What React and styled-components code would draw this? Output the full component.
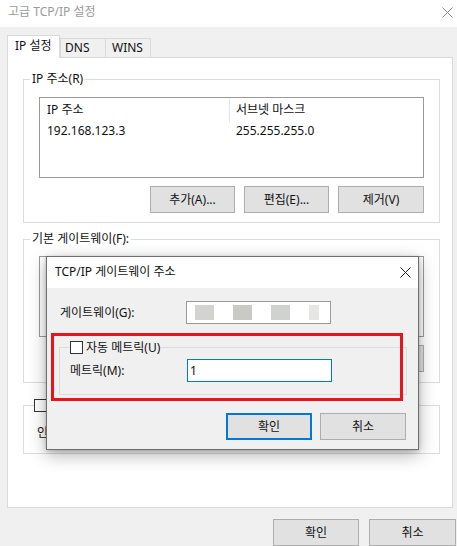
import React from 'react';
import styled, { createGlobalStyle } from 'styled-components';

const FONT = '"Noto Sans", "Noto Sans CJK KR", sans-serif';
const BORDER_LIGHT = '#d9d9d9';
const BTN_BORDER = '#adadad';
const WIN_BLUE = '#0078d7';

const GlobalStyle = createGlobalStyle`
  html, body { margin: 0; padding: 0; background: #f0f0f0; }
  body { font-family: ${FONT}; font-size: 12px; line-height: 16px; color: #111; }
  * { box-sizing: border-box; }
`;

const Window = styled.div`
  position: relative;
  width: 457px;
  height: 546px;
  background: #f0f0f0;
  overflow: hidden;
  display: flex;
  flex-direction: column;
`;

const TitleBar = styled.div`
  height: 27px;
  flex: none;
  background: #fff;
  display: flex;
  align-items: center;
  justify-content: space-between;
  padding: 0 4px 3px 8px;
  color: ${({ $active }) => ($active ? '#111' : '#9a9a9a')};
`;

const CloseIcon = ({ color = '#777' }) => (
  <svg width="11" height="11" viewBox="0 0 11 11">
    <path d="M0.5 0.5 L10.5 10.5 M10.5 0.5 L0.5 10.5" stroke={color} strokeWidth="1" fill="none" />
  </svg>
);

const Body = styled.div`
  flex: 1;
  display: flex;
  flex-direction: column;
  padding: 8px 1px 0 7px;
`;

const TabRow = styled.div`
  height: 22px;
  display: flex;
  align-items: flex-end;
  position: relative;
  z-index: 1;
`;

const Tab = styled.div`
  width: ${({ $w }) => $w}px;
  height: ${({ $selected }) => ($selected ? 23 : 19)}px;
  margin-bottom: ${({ $selected }) => ($selected ? -1 : 0)}px;
  margin-left: ${({ $ml }) => $ml || 0}px;
  padding-left: ${({ $pl }) => $pl}px;
  background: ${({ $selected }) => ($selected ? '#fff' : '#f0f0f0')};
  border: 1px solid ${BORDER_LIGHT};
  border-bottom: none;
  display: flex;
  align-items: center;
  padding-bottom: ${({ $selected }) => ($selected ? 2 : 0)}px;
`;

const Panel = styled.div`
  height: 451px;
  margin-right: 3px;
  background: #fff;
  border: 1px solid ${BORDER_LIGHT};
  padding: 0 12px 0 15px;
  display: flex;
  flex-direction: column;
`;

const Group = styled.fieldset`
  margin: ${({ $mt }) => $mt}px 0 0 0;
  padding: ${({ $pt }) => $pt}px 15px ${({ $pb }) => $pb}px ${({ $pl }) => $pl}px;
  border: 1px solid #dcdcdc;
  min-width: 0;
`;

const Legend = styled.legend`
  padding: 0 ${({ $px }) => ($px === undefined ? 2 : $px)}px;
  height: ${({ $h }) => $h || 16}px;
  line-height: ${({ $h }) => $h || 16}px;
  display: flex;
  align-items: center;
  gap: 3px;
`;

const ListBox = styled.div`
  margin-left: 9px;
  height: 81px;
  border: 1px solid #9a9a9a;
  background: #fff;
`;

const ListRow = styled.div`
  display: grid;
  grid-template-columns: 190px 1fr;
  height: ${({ $h }) => $h}px;
  align-items: center;
`;

const Cell = styled.div`
  height: 100%;
  display: flex;
  align-items: center;
  padding-left: ${({ $first }) => ($first ? 7 : 6)}px;
  border-right: ${({ $divider }) => ($divider ? '1px solid #e5e5e5' : 'none')};
`;

const ButtonRow = styled.div`
  display: flex;
  justify-content: flex-end;
  gap: ${({ $gap }) => $gap}px;
  margin-top: ${({ $mt }) => $mt || 0}px;
  margin-right: ${({ $mr }) => $mr || 0}px;
`;

const Button = styled.div`
  width: ${({ $w }) => $w || 85}px;
  height: ${({ $h }) => $h || 27}px;
  background: #e1e1e1;
  border: ${({ $default }) => ($default ? `2px solid ${WIN_BLUE}` : `1px solid ${BTN_BORDER}`)};
  display: flex;
  align-items: center;
  justify-content: center;
  color: #111;
`;

const CheckBox = styled.span`
  display: inline-block;
  width: 13px;
  height: 13px;
  border: 1px solid #333;
  background: #fff;
  flex: none;
`;

const FieldRow = styled.div`
  display: flex;
  align-items: center;
  height: 23px;
  margin-left: ${({ $ml }) => $ml || 0}px;
`;

const Label = styled.span`
  width: ${({ $w }) => $w}px;
  flex: none;
`;

const TextInput = styled.div`
  width: 145px;
  height: 23px;
  background: #fff;
  border: 1px solid ${({ $focused }) => ($focused ? WIN_BLUE : '#9a9a9a')};
  display: flex;
  align-items: center;
  gap: 19px;
  padding-left: ${({ $pl }) => $pl}px;
`;

const BlurBlock = styled.span`
  width: ${({ $w }) => $w}px;
  height: 15px;
  background: ${({ $c }) => $c};
  flex: none;
`;

const Footer = styled.div`
  display: flex;
  justify-content: flex-end;
  gap: 10px;
  margin-top: 11px;
`;

/* modal dialog lies over the main window */
const Dialog = styled.div`
  position: absolute;
  left: 46px;
  top: 256px;
  width: 373px;
  background: #f0f0f0;
  border: 1px solid #6e6e6e;
  box-shadow: 0 5px 16px rgba(0, 0, 0, 0.3), 0 1px 4px rgba(0, 0, 0, 0.2);
  display: flex;
  flex-direction: column;
  z-index: 5;
`;

const DialogTitle = styled(TitleBar)`
  height: 31px;
  padding: 0 7px 1px 8px;
`;

const DialogBody = styled.div`
  padding: 13px 11px 9px 12px;
  display: flex;
  flex-direction: column;
`;

const Highlight = styled.div`
  position: absolute;
  left: 4px;
  top: 76px;
  width: 352px;
  height: 68px;
  border: 3px solid #e8141b;
  pointer-events: none;
`;

const blurBlocks = [
  { w: 19, c: '#d3d3d1' },
  { w: 19, c: '#c9c9c5' },
  { w: 19, c: '#d0d2d0' },
  { w: 10, c: '#e6e6e4' },
];

export default function App() {
  return (
    <>
      <GlobalStyle />
      <Window>
        <TitleBar>
          <span>고급 TCP/IP 설정</span>
          <CloseIcon color="#888" />
        </TitleBar>
        <Body>
          <TabRow>
            <Tab $selected $w={53} $pl={7}>IP 설정</Tab>
            <Tab $w={46} $pl={4}>DNS</Tab>
            <Tab $w={46} $pl={6} $ml={-1}>WINS</Tab>
          </TabRow>
          <Panel>
            <Group $mt={13} $pt={10} $pb={9} $pl={6}>
              <Legend>IP 주소(R)</Legend>
              <ListBox>
                <ListRow $h={24}>
                  <Cell $first $divider>IP 주소</Cell>
                  <Cell>서브넷 마스크</Cell>
                </ListRow>
                <ListRow $h={18}>
                  <Cell $first>192.168.123.3</Cell>
                  <Cell>255.255.255.0</Cell>
                </ListRow>
              </ListBox>
              <ButtonRow $gap={9} $mt={8}>
                <Button>추가(A)...</Button>
                <Button>편집(E)...</Button>
                <Button $w={86}>제거(V)</Button>
              </ButtonRow>
            </Group>

            <Group $mt={8} $pt={9} $pb={10} $pl={6}>
              <Legend>기본 게이트웨이(F):</Legend>
              <ListBox />
              <ButtonRow $gap={9} $mt={8}>
                <Button>추가(D)...</Button>
                <Button>편집(T)...</Button>
                <Button $w={86}>제거(M)</Button>
              </ButtonRow>
            </Group>

            <Group $mt={14} $pt={8} $pb={9} $pl={10}>
              <Legend $px={0}>
                <CheckBox />
                자동 메트릭(U)
              </Legend>
              <FieldRow $ml={3}>
                <Label $w={160}>인터페이스 메트릭(N):</Label>
              </FieldRow>
            </Group>
          </Panel>
          <Footer>
            <Button $w={86}>확인</Button>
            <Button $w={87}>취소</Button>
          </Footer>
        </Body>

        <Dialog>
          <DialogTitle $active>
            <span>TCP/IP 게이트웨이 주소</span>
            <CloseIcon color="#222" />
          </DialogTitle>
          <DialogBody>
            <FieldRow $ml={1}>
              <Label $w={126}>게이트웨이(G):</Label>
              <TextInput $pl={8}>
                {blurBlocks.map((b, i) => (
                  <BlurBlock key={i} $w={b.w} $c={b.c} />
                ))}
              </TextInput>
            </FieldRow>
            <Group $mt={17} $pt={5} $pb={12} $pl={10}>
              <Legend $px={0} $h={13}>
                <CheckBox />
                자동 메트릭(U)
              </Legend>
              <FieldRow>
                <Label $w={117}>메트릭(M):</Label>
                <TextInput $focused $pl={2}>1</TextInput>
              </FieldRow>
            </Group>
            <ButtonRow $gap={8} $mt={18} $mr={1}>
              <Button $default $w={86}>확인</Button>
              <Button $w={86}>취소</Button>
            </ButtonRow>
          </DialogBody>
          <Highlight />
        </Dialog>
      </Window>
    </>
  );
}
